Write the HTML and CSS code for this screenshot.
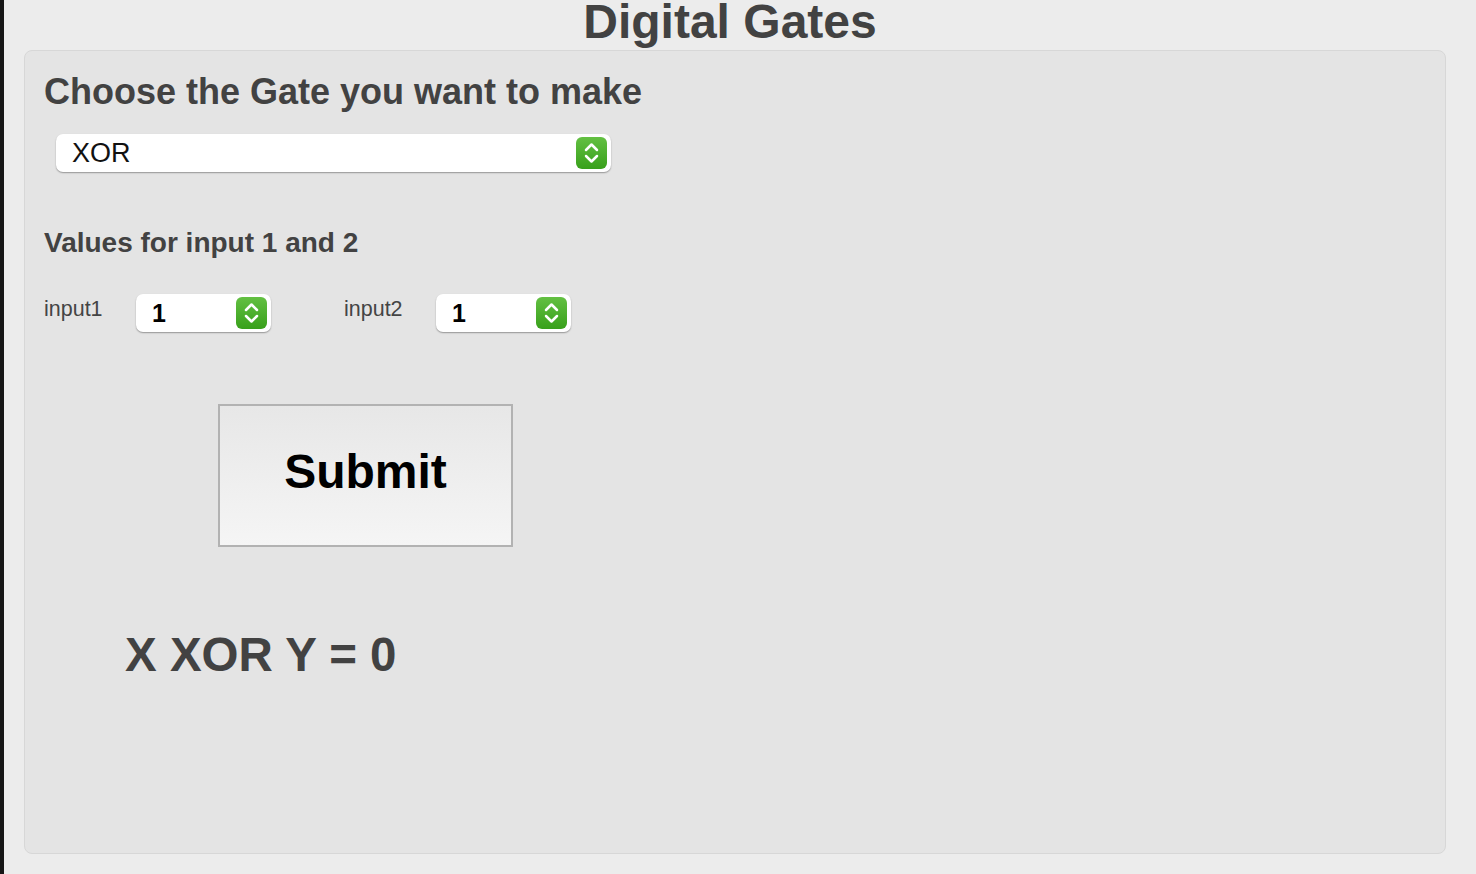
FILE: index.html
```html
<!DOCTYPE html>
<html lang="en">
<head>
<meta charset="utf-8">
<title>Digital Gates</title>
<link rel="stylesheet" href="styles.css">
</head>
<body>
<div class="page">
  <h1 class="title">Digital Gates</h1>
  <div class="card">
    <h2 class="heading">Choose the Gate you want to make</h2>
    <div class="select select-wide">
      <span class="select-value">XOR</span>
      <svg class="stepper" width="31" height="32" viewBox="0 0 31 32">
        <defs>
          <linearGradient id="g1" x1="0" y1="0" x2="0" y2="1">
            <stop offset="0" stop-color="#63c042"/>
            <stop offset="1" stop-color="#38a01b"/>
          </linearGradient>
        </defs>
        <rect x="0" y="0" width="31" height="32" rx="6" fill="url(#g1)"/>
        <path d="M10 13 L15.5 7.5 L21 13" fill="none" stroke="#fff" stroke-width="2.5" stroke-linecap="round" stroke-linejoin="round"/>
        <path d="M10 19 L15.5 24.5 L21 19" fill="none" stroke="#fff" stroke-width="2.5" stroke-linecap="round" stroke-linejoin="round"/>
      </svg>
    </div>

    <h3 class="subheading">Values for input 1 and 2</h3>
    <div class="inputs-row">
      <span class="input-label">input1</span>
      <div class="select select-small">
        <span class="select-value bold">1</span>
        <svg class="stepper" width="31" height="32" viewBox="0 0 31 32">
          <defs>
            <linearGradient id="g2" x1="0" y1="0" x2="0" y2="1">
              <stop offset="0" stop-color="#63c042"/>
              <stop offset="1" stop-color="#38a01b"/>
            </linearGradient>
          </defs>
          <rect x="0" y="0" width="31" height="32" rx="6" fill="url(#g2)"/>
          <path d="M10 13 L15.5 7.5 L21 13" fill="none" stroke="#fff" stroke-width="2.5" stroke-linecap="round" stroke-linejoin="round"/>
          <path d="M10 19 L15.5 24.5 L21 19" fill="none" stroke="#fff" stroke-width="2.5" stroke-linecap="round" stroke-linejoin="round"/>
        </svg>
      </div>
      <span class="input-label second">input2</span>
      <div class="select select-small">
        <span class="select-value bold">1</span>
        <svg class="stepper" width="31" height="32" viewBox="0 0 31 32">
          <defs>
            <linearGradient id="g3" x1="0" y1="0" x2="0" y2="1">
              <stop offset="0" stop-color="#63c042"/>
              <stop offset="1" stop-color="#38a01b"/>
            </linearGradient>
          </defs>
          <rect x="0" y="0" width="31" height="32" rx="6" fill="url(#g3)"/>
          <path d="M10 13 L15.5 7.5 L21 13" fill="none" stroke="#fff" stroke-width="2.5" stroke-linecap="round" stroke-linejoin="round"/>
          <path d="M10 19 L15.5 24.5 L21 19" fill="none" stroke="#fff" stroke-width="2.5" stroke-linecap="round" stroke-linejoin="round"/>
        </svg>
      </div>
    </div>

    <button class="submit" type="button">Submit</button>

    <div class="result">X XOR Y = 0</div>
  </div>
</div>
</body>
</html>
```

FILE: styles.css
```css
html, body {
  margin: 0;
  padding: 0;
  height: 100%;
}

body {
  background: #ececec;
  border-left: 4px solid #161616;
  font-family: "Liberation Sans", Arial, Helvetica, sans-serif;
  color: #434343;
  overflow: hidden;
}

.page {
  width: 1452px;
  display: flex;
  flex-direction: column;
}

.title {
  margin: 0 0 6px 0;
  font-size: 48px;
  line-height: 44px;
  height: 44px;
  font-weight: bold;
  text-align: center;
  color: #424242;
}

.card {
  margin-left: 20px;
  width: 1422px;
  height: 804px;
  box-sizing: border-box;
  background: #e4e4e4;
  border: 1px solid #d7d7d7;
  border-radius: 8px;
  padding: 21px 0 0 19px;
  display: flex;
  flex-direction: column;
  align-items: flex-start;
}

.heading {
  margin: 0;
  font-size: 36px;
  line-height: 40px;
  font-weight: bold;
  color: #424242;
}

.select {
  background: #fff;
  border-radius: 7px;
  box-shadow: 0 1px 1.5px rgba(0, 0, 0, 0.35);
  height: 38px;
  box-sizing: border-box;
  display: flex;
  align-items: center;
  justify-content: space-between;
  padding: 0 4px 0 16px;
}

.select-wide {
  margin-top: 22px;
  margin-left: 12px;
  width: 555px;
}

.select-value {
  font-size: 27px;
  line-height: 35px;
  color: #111;
}

.select-value.bold {
  font-weight: bold;
  font-size: 25px;
  line-height: 35px;
  color: #000;
}

.stepper {
  display: block;
  flex: none;
}

.subheading {
  margin: 55px 0 0 0;
  font-size: 28px;
  line-height: 32px;
  font-weight: bold;
  color: #424242;
}

.inputs-row {
  margin-top: 35px;
  display: flex;
  align-items: flex-start;
}

.input-label {
  font-size: 21.5px;
  line-height: 24px;
  margin-top: 3px;
  width: 92px;
  color: #444;
}

.input-label.second {
  margin-left: 73px;
}

.select-small {
  width: 135px;
}

.submit {
  margin-top: 72px;
  margin-left: 174px;
  width: 295px;
  height: 143px;
  border: 2px solid #b2b2b2;
  border-radius: 0;
  background: linear-gradient(to bottom, #e7e7e7, #f5f5f5);
  font-family: "Liberation Sans", Arial, Helvetica, sans-serif;
  font-size: 48px;
  font-weight: bold;
  color: #000;
  line-height: 48px;
  padding: 0 0 8px 0;
  cursor: pointer;
}

.result {
  margin-top: 80px;
  margin-left: 81px;
  font-size: 47.5px;
  line-height: 56px;
  font-weight: bold;
  color: #424242;
}
```
